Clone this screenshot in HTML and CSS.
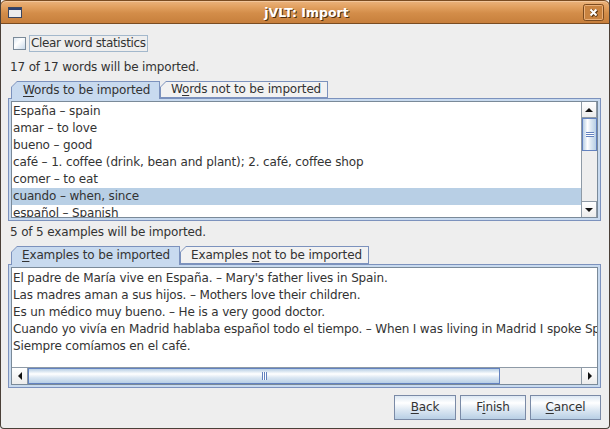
FILE: index.html
```html
<!DOCTYPE html>
<html>
<head>
<meta charset="utf-8">
<title>jVLT: Import</title>
<link rel="stylesheet" href="styles.css">
</head>
<body>
<div class="window">
  <div class="titlebar">
    <svg class="app-icon" width="14" height="11" viewBox="0 0 14 11"><rect x="0.5" y="0.5" width="13" height="10" fill="#ececec" stroke="#3b4660"/><rect x="1" y="1" width="12" height="2" fill="#2c3f6e"/></svg>
    <div class="title">jVLT: Import</div>
    <svg class="close-btn" width="21" height="17" viewBox="0 0 21 17"><rect x="0.5" y="0.5" width="20" height="16" rx="2" fill="#c98340" stroke="#7a4a1f"/><rect x="1.5" y="1.5" width="18" height="14" rx="1" fill="none" stroke="#eab07a"/><path d="M7.5 5.5l6 6M13.5 5.5l-6 6" stroke="#5a3512" stroke-width="3" transform="translate(0.6 0.6)"/><path d="M7.5 5.5l6 6M13.5 5.5l-6 6" stroke="#fff" stroke-width="2"/></svg>
  </div>
  <div class="content">
    <div class="check-row">
      <span class="checkbox"></span>
      <span class="check-label">Clear word statistics</span>
    </div>
    <div class="status">17 of 17 words will be imported.</div>
    <div class="tabs tabs-a">
      <div class="tab sel tab-a1"><div class="tab-in"><u>W</u>ords to be imported</div></div>
      <div class="tab tab-a2"><div class="tab-in">W<u>o</u>rds not to be imported</div></div>
    </div>
    <div class="panel panel-a">
      <div class="pane">
        <div class="list">
          <div class="row">España – spain</div>
          <div class="row">amar – to love</div>
          <div class="row">bueno – good</div>
          <div class="row">café – 1. coffee (drink, bean and plant); 2. café, coffee shop</div>
          <div class="row">comer – to eat</div>
          <div class="row selected">cuando – when, since</div>
          <div class="row">español – Spanish</div>
        </div>
        <div class="vscroll">
          <div class="sbtn"><span class="arr up"></span></div>
          <div class="vthumb"><span class="grip-h"></span></div>
          <div class="vtrack"></div>
          <div class="sbtn"><span class="arr down"></span></div>
        </div>
      </div>
    </div>
    <div class="status status-b">5 of 5 examples will be imported.</div>
    <div class="tabs tabs-b">
      <div class="tab sel tab-b1"><div class="tab-in"><u>E</u>xamples to be imported</div></div>
      <div class="tab tab-b2"><div class="tab-in">Examples <u>n</u>ot to be imported</div></div>
    </div>
    <div class="panel panel-b">
      <div class="pane pane-col">
        <div class="textarea">
          <div class="line">El padre de María vive en España. – Mary's father lives in Spain.</div>
          <div class="line">Las madres aman a sus hijos. – Mothers love their children.</div>
          <div class="line">Es un médico muy bueno. – He is a very good doctor.</div>
          <div class="line">Cuando yo vivía en Madrid hablaba español todo el tiempo. – When I was living in Madrid I spoke Spanish all the time.</div>
          <div class="line">Siempre comíamos en el café.</div>
        </div>
        <div class="hscroll">
          <div class="sbtn hb"><span class="arr left"></span></div>
          <div class="hthumb"><span class="grip-v"></span></div>
          <div class="htrack"></div>
          <div class="sbtn hb"><span class="arr right"></span></div>
        </div>
      </div>
    </div>
    <div class="buttons">
      <div class="btn btn-back"><u>B</u>ack</div>
      <div class="btn btn-finish">F<u>i</u>nish</div>
      <div class="btn btn-cancel"><u>C</u>ancel</div>
    </div>
  </div>
</div>
</body>
</html>
```

FILE: styles.css
```css
* { box-sizing: border-box; }
html, body { margin: 0; padding: 0; background: #eeeeee; }
body {
  font-family: "DejaVu Sans", "Liberation Sans", sans-serif;
  font-size: 12px;
  letter-spacing: -0.15px;
  color: #333333;
}
u { text-decoration: underline; text-underline-offset: 2px; text-decoration-thickness: 1px; }

.window {
  width: 610px;
  height: 429px;
  display: flex;
  flex-direction: column;
  background: #eeeeee;
  border-left: 1px solid #4a4038;
  border-right: 1px solid #4a4038;
  border-bottom: 1px solid #4a4038;
  border-radius: 0 0 4px 4px;
  overflow: hidden;
}

.titlebar {
  height: 24px;
  margin: 0 -1px;
  flex: none;
  display: flex;
  align-items: center;
  border: 1px solid #7a4c22;
  border-radius: 6px 6px 0 0;
  background: linear-gradient(#eab37d 0%, #e3a262 25%, #d38d49 55%, #c77f3c 100%);
  box-shadow: inset 0 1px 0 #f3c79c;
}
.app-icon { margin-left: 7px; flex: none; margin-top: 1px; }
.title {
  flex: 1;
  text-align: center;
  padding-left: 8px;
  color: #ffffff;
  font-weight: bold;
  font-size: 12.5px;
  letter-spacing: 0;
  text-shadow: 1px 1px 0 #4e2e10;
}
.close-btn { flex: none; margin-right: 5px; }

.content {
  flex: 1;
  display: flex;
  flex-direction: column;
  padding: 0 8px 0 7px;
}

.check-row {
  margin-top: 11px;
  height: 17px;
  display: flex;
  align-items: center;
  padding-left: 5px;
}
.checkbox {
  width: 13px;
  height: 13px;
  border: 1px solid #7a8a99;
  background: linear-gradient(135deg, #dde8f3 0%, #ffffff 40%, #c9daeb 100%);
}
.check-label {
  margin-left: 3px;
  width: 119px;
  height: 17px;
  line-height: 15px;
  padding: 0 0 0 1px;
  border: 1px solid #a3b8cc;
  white-space: nowrap;
  letter-spacing: -0.35px;
}

.status {
  margin-top: 7px;
  height: 16px;
  line-height: 16px;
  padding-left: 2px;
  white-space: nowrap;
}
.status-b { margin-top: 3px; }

.tabs {
  display: flex;
  align-items: flex-end;
  padding-left: 3px;
  position: relative;
  z-index: 1;
  margin-top: 6px;
}
.tabs-a { height: 17px; }
.tabs-b { height: 18px; }

.tab {
  height: 100%;
  background: #7c92bd;
  padding: 1px 1px 1px 1px;
  clip-path: polygon(0 6px, 6px 0, 100% 0, 100% 100%, 0 100%);
  flex: none;
}
.tab-in {
  height: 100%;
  background: #f2f2f2;
  clip-path: polygon(0 5px, 5px 0, 100% 0, 100% 100%, 0 100%);
  padding-left: 10px;
  white-space: nowrap;
  line-height: 15px;
}
.tab.sel { padding-bottom: 0; margin-bottom: -1px; }
.tabs-a .tab.sel { height: 18px; }
.tabs-b .tab.sel { height: 19px; }
.tab.sel .tab-in { background: #c8daef; line-height: 16px; }
.tabs-b .tab-in { line-height: 16px; }
.tabs-b .tab.sel .tab-in { line-height: 17px; }
.tab-a1 { width: 149px; padding-left: 1px; }
.tab-a1 .tab-in { padding-left: 11px; }
.tab-a2 { width: 168px; }
.tab-b1 { width: 169px; }
.tab-b2 { width: 189px; }

.panel {
  border: 1px solid #7c92bd;
  background: #c8daef;
  padding: 2px;
  flex: none;
}
.panel-a { height: 123px; }
.panel-b { height: 124px; }

.pane {
  height: 100%;
  border: 1px solid #7a8a99;
  background: #ffffff;
  display: flex;
  overflow: hidden;
}
.pane-col { flex-direction: column; }

.list {
  flex: 1;
  padding-top: 1px;
  overflow: hidden;
  min-width: 0;
}
.row {
  height: 17px;
  line-height: 17px;
  padding-left: 1px;
  white-space: nowrap;
}
.row.selected { background: #b8cfe5; }

.vscroll {
  width: 16px;
  flex: none;
  display: flex;
  flex-direction: column;
  background: #eeeeee;
  border-left: 1px solid #8e9aa6;
}
.sbtn {
  height: 16px;
  flex: none;
  display: flex;
  align-items: center;
  justify-content: center;
  background: linear-gradient(#ffffff, #ececec);
  border: 1px solid #8e9aa6;
  border-left: none;
}
.vscroll .sbtn:first-child { border-top: none; }
.vscroll .sbtn:last-child { border-bottom: none; }
.arr { width: 0; height: 0; display: block; }
.arr.up { border-left: 4px solid transparent; border-right: 4px solid transparent; border-bottom: 4px solid #111; }
.arr.down { border-left: 4px solid transparent; border-right: 4px solid transparent; border-top: 4px solid #111; }
.arr.left { border-top: 4px solid transparent; border-bottom: 4px solid transparent; border-right: 4px solid #111; }
.arr.right { border-top: 4px solid transparent; border-bottom: 4px solid transparent; border-left: 4px solid #111; }

.vthumb {
  height: 33px;
  flex: none;
  border: 1px solid #6382bf;
  background: linear-gradient(to right, #b8cfe5 0%, #ffffff 35%, #dde8f3 60%, #b8cfe5 100%);
  display: flex;
  align-items: center;
  justify-content: center;
}
.grip-h {
  width: 8px;
  height: 5px;
  background: repeating-linear-gradient(#6382bf 0 1px, #ffffff 1px 2px);
}
.vtrack { flex: 1; background: #eeeeee; }

.textarea {
  flex: 1;
  padding-top: 2px;
  padding-left: 1px;
  overflow: hidden;
}
.line {
  height: 17px;
  line-height: 17px;
  white-space: nowrap;
}

.hscroll {
  height: 17px;
  flex: none;
  display: flex;
  background: #eeeeee;
  border-top: 1px solid #8e9aa6;
}
.sbtn.hb {
  width: 16px;
  height: 16px;
  border: 1px solid #8e9aa6;
  border-top: none;
  border-bottom: none;
}
.sbtn.hb:first-child { border-left: none; }
.sbtn.hb:last-child { border-right: none; }
.hthumb {
  width: 472px;
  flex: none;
  border: 1px solid #6382bf;
  background: linear-gradient(#b8cfe5 0%, #ffffff 35%, #dde8f3 60%, #b8cfe5 100%);
  display: flex;
  align-items: center;
  justify-content: center;
}
.grip-v {
  width: 5px;
  height: 8px;
  background: repeating-linear-gradient(to right, #6382bf 0 1px, #ffffff 1px 2px);
}
.htrack { flex: 1; }

.buttons {
  margin-top: 7px;
  height: 25px;
  display: flex;
  justify-content: flex-end;
  gap: 4px;
}
.btn {
  height: 25px;
  border: 1px solid #7a8aa6;
  background: linear-gradient(#dde8f3 0%, #ffffff 30%, #dde8f3 60%, #b8cfe5 100%);
  text-align: center;
  line-height: 23px;
  white-space: nowrap;
}
.btn-back { width: 62px; }
.btn-finish { width: 66px; }
.btn-cancel { width: 71px; }
```
